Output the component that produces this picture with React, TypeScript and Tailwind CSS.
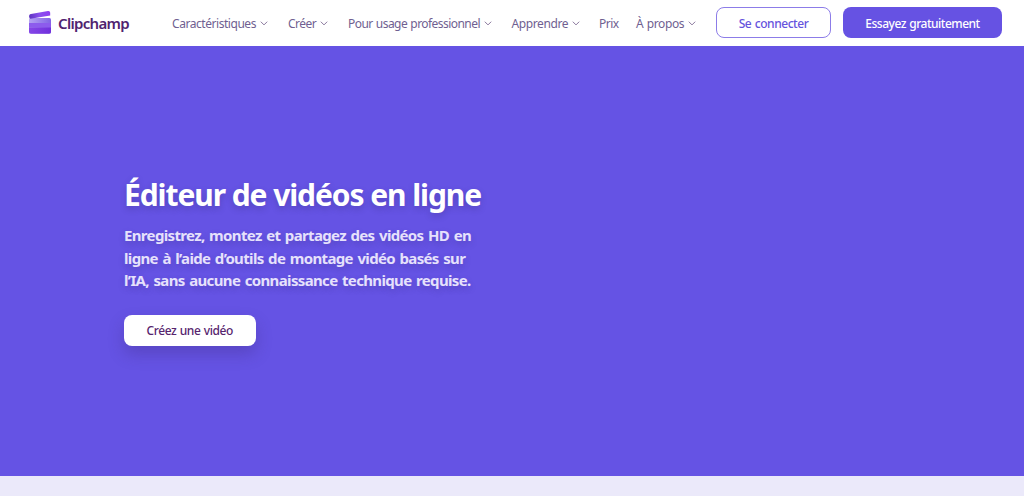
import React from "react";

const navItems = [
  { title: "Caractéristiques", menu: true, width: "w-[116px]", text: "w-[84px] tracking-[-0.45px]" },
  { title: "Créer", menu: true, width: "w-[60px]", text: "w-[28px] tracking-[-0.5px]" },
  { title: "Pour usage professionnel", menu: true, width: "w-[163.5px]", text: "w-[132px] tracking-[-0.55px] [word-spacing:0.6px]" },
  { title: "Apprendre", menu: true, width: "w-[87.5px]", text: "w-[56px] tracking-[-0.4px]" },
  { title: "Prix", menu: false, width: "w-[37px]", text: "w-[20px] tracking-[-0.5px]" },
  { title: "À propos", menu: true, width: "w-[80px]", text: "w-[48px] tracking-[-0.4px] [word-spacing:0.8px]" },
];

const Logo = () => (
  <svg className="block h-[24px] w-[24px]" viewBox="0 0 24 24" fill="none">
    <defs>
      <linearGradient id="clap" x1="1" y1="7" x2="22" y2="3" gradientUnits="userSpaceOnUse">
        <stop stopColor="#5b32bd" />
        <stop offset="0.5" stopColor="#8a50ee" />
        <stop offset="1" stopColor="#8f3ef0" />
      </linearGradient>
      <linearGradient id="slate" x1="1" y1="8" x2="22" y2="8" gradientUnits="userSpaceOnUse">
        <stop stopColor="#b5a4f2" />
        <stop offset="1" stopColor="#8466e6" />
      </linearGradient>
      <linearGradient id="base" x1="1" y1="15" x2="22" y2="23" gradientUnits="userSpaceOnUse">
        <stop stopColor="#8748e8" />
        <stop offset="1" stopColor="#7030dc" />
      </linearGradient>
    </defs>
    <rect x="1" y="7" width="22" height="15.5" rx="1.5" fill="url(#slate)" />
    <path d="M1 12h22v4.5H1z" fill="#8d5bed" />
    <path d="M1 16.5h22v4.2a2 2 0 0 1-2 2H3a2 2 0 0 1-2-2z" fill="url(#base)" />
    <path d="M1.1 5.5C1 4.2 1.6 3.3 2.9 3L20 .1c1.3-.2 2.2.6 2.2 1.9v2.6L2.5 7.8C1.7 7.9 1.2 6.7 1.1 5.5z" fill="url(#clap)" />
  </svg>
);

const Chevron = () => (
  <svg className="ml-[4px] h-[5px] w-[8px] shrink-0" viewBox="0 0 8 5" fill="none">
    <path d="M.8.7 4 3.9 7.2.7" stroke="#8a789d" strokeWidth="1" />
  </svg>
);

const Header = () => (
  <header className="flex h-[46px] items-center bg-white">
    <a className="ml-[28px] flex w-[144px] items-center">
      <Logo />
      <span className="ml-[6px] text-[15px] leading-[20px] font-semibold tracking-[-0.68px] text-[#50236f]">
        Clipchamp
      </span>
    </a>
    <nav className="flex">
      {navItems.map((item) => (
        <a key={item.title} className={`flex shrink-0 items-center ${item.width}`}>
          <span className={`pt-[2px] text-[12px] leading-[18px] whitespace-nowrap text-[#705f91] ${item.text}`}>
            {item.title}
          </span>
          {item.menu && <Chevron />}
        </a>
      ))}
    </nav>
    <button className="mb-px h-[31px] w-[115px] rounded-[8px] border border-[#8c7ce8] pt-[2px] text-[12px] font-medium tracking-[-0.45px] text-[#6553dd] [word-spacing:0.8px]">
      Se connecter
    </button>
    <button className="mb-px ml-[12px] h-[31px] w-[159px] rounded-[8px] bg-[#6652e3] pt-[2px] text-[12px] font-medium tracking-[-0.5px] text-white [word-spacing:0.8px]">
      Essayez gratuitement
    </button>
  </header>
);

const Hero = () => (
  <section className="h-[430px] bg-[#6553e4] pt-[129px] pl-[124px]">
    <h1 className="text-[30px] leading-[40px] font-bold tracking-[-1.08px] whitespace-nowrap text-white [text-shadow:0_3px_6px_rgba(50,40,110,0.3)]">
      Éditeur de vidéos en ligne
    </h1>
    <p className="mt-[9px] text-[15px] leading-[22.5px] font-bold tracking-[-0.65px] whitespace-nowrap text-[#e6e1fc] [word-spacing:1.25px] [text-shadow:0_3px_6px_rgba(50,40,110,0.25)]">
      Enregistrez, montez et partagez des vidéos HD en
      <br />
      ligne à l’aide d’outils de montage vidéo basés sur
      <br />
      l’IA, sans aucune connaissance technique requise.
    </p>
    <button className="mt-[23px] h-[31px] w-[131.5px] rounded-[8px] bg-white pt-[2px] text-[12px] font-medium tracking-[-0.4px] text-[#56246d] shadow-[0_8px_16px_rgba(60,40,120,0.3)] [word-spacing:0.6px]">
      Créez une vidéo
    </button>
  </section>
);

export default function App() {
  return (
    <div className="h-[496px] w-[1024px] overflow-hidden bg-[#ebe9fa] font-['Noto_Sans','Open_Sans',sans-serif]">
      <Header />
      <Hero />
    </div>
  );
}
